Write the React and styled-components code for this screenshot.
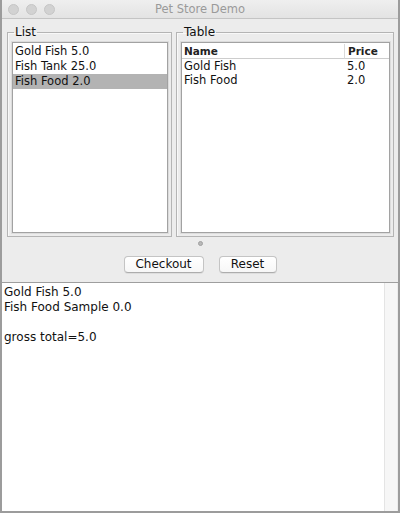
import { Fragment } from 'react';
import styled, { createGlobalStyle } from 'styled-components';

const GlobalStyle = createGlobalStyle`
  html, body {
    margin: 0;
    padding: 0;
    background: #ffffff;
  }
  * {
    box-sizing: border-box;
  }
`;

const Window = styled.div`
  width: 400px;
  height: 513px;
  display: flex;
  flex-direction: column;
  background: #ececec;
  border-left: 2px solid #9c9c9c;
  border-right: 2px solid #9c9c9c;
  border-bottom: 2px solid #9c9c9c;
  font-family: 'DejaVu Sans', 'Liberation Sans', sans-serif;
  color: #111;
  overflow: hidden;
`;

const TitleBar = styled.div`
  height: 19px;
  flex: none;
  display: grid;
  grid-template-columns: 70px 1fr 70px;
  align-items: center;
  background: linear-gradient(#efefef, #e3e3e3);
  border-bottom: 1px solid #c4c4c4;
  margin: 0 -2px;
`;

const Lights = styled.div`
  display: flex;
  gap: 7px;
  padding-left: 8px;
`;

const Light = styled.span`
  width: 11px;
  height: 11px;
  border-radius: 50%;
  background: #d2d2d2;
  border: 1px solid #c6c6c6;
`;

const Title = styled.div`
  text-align: center;
  font-size: 11.5px;
  color: #9a9a9a;
`;

const TopArea = styled.div`
  height: 219px;
  flex: none;
  display: grid;
  grid-template-columns: 165px 1fr;
  gap: 4px;
  padding: 7px 4px 1px 5px;
`;

const Panel = styled.fieldset`
  margin: 0;
  min-width: 0;
  display: flex;
  flex-direction: column;
  padding: 0 3px 3px 4px;
  border: 1px solid #b4b4b4;
  box-shadow: inset 1px 1px 0 #f8f8f8;
`;

const Legend = styled.legend`
  padding: 0 1px;
  margin-left: 2px;
  font-size: 12px;
  line-height: 13px;
  color: #111;
`;

const Inner = styled.div`
  flex: 1;
  background: #fff;
  border: 1px solid #a2a2a2;
  box-shadow: 0 0 0 1px #dcdcdc;
  margin-top: 3px;
  padding-top: 1px;
`;

const ListRow = styled.div`
  height: 15px;
  line-height: 15px;
  padding-left: 2px;
  font-size: 11.5px;
  background: ${(p) => (p.$selected ? '#b3b3b3' : 'transparent')};
`;

const TableGrid = styled.div`
  display: grid;
  grid-template-columns: 1fr 45px;
`;

const HeadCell = styled.div`
  height: 15px;
  line-height: 14px;
  font-size: 10.5px;
  font-weight: 600;
  color: #222;
  padding-left: ${(p) => (p.$first ? '2px' : '3px')};
  border-bottom: 1px solid #cdcdcd;
  border-left: ${(p) => (p.$first ? 'none' : '1px solid #dadada')};
`;

const Cell = styled.div`
  height: 14px;
  line-height: 14px;
  font-size: 11.5px;
  padding-left: ${(p) => (p.$first ? '2px' : '3px')};
`;

const Divider = styled.div`
  height: 11px;
  flex: none;
  display: flex;
  align-items: center;
  justify-content: center;
`;

const Grip = styled.span`
  width: 5px;
  height: 5px;
  border-radius: 50%;
  background: #b8b8b8;
  border: 1px solid #a0a0a0;
`;

const ButtonRow = styled.div`
  height: 33px;
  flex: none;
  display: flex;
  justify-content: center;
  gap: 15px;
  padding-top: 7px;
`;

const Button = styled.button`
  width: ${(p) => p.$w}px;
  height: 17px;
  padding: 0;
  font-family: inherit;
  font-size: 12px;
  line-height: 15px;
  color: #111;
  background: linear-gradient(#ffffff, #f7f7f7);
  border: 1px solid #c4c4c4;
  border-bottom-color: #adadad;
  border-radius: 4px;
  box-shadow: 0 1px 0 rgba(0, 0, 0, 0.06);
`;

const TextArea = styled.div`
  flex: 1;
  display: flex;
  background: #fff;
  border-top: 1px solid #9e9e9e;
  margin: 0 -1px;
`;

const TextBody = styled.div`
  flex: 1;
  padding: 2px 3px;
  font-size: 12px;
  line-height: 15px;
  white-space: pre;
`;

const Scrollbar = styled.div`
  width: 14px;
  margin-right: 1px;
  background: #f6f6f6;
  border-left: 1px solid #e4e4e4;
  border-right: 1px solid #ececec;
`;

const items = [
  { name: 'Gold Fish', price: '5.0' },
  { name: 'Fish Tank', price: '25.0' },
  { name: 'Fish Food', price: '2.0' },
];

const cart = [
  { name: 'Gold Fish', price: '5.0' },
  { name: 'Fish Food', price: '2.0' },
];

export default function App() {
  const output = 'Gold Fish 5.0\nFish Food Sample 0.0\n\ngross total=5.0';

  return (
    <>
      <GlobalStyle />
      <Window>
        <TitleBar>
          <Lights>
            <Light />
            <Light />
            <Light />
          </Lights>
          <Title>Pet Store Demo</Title>
          <div />
        </TitleBar>

        <TopArea>
          <Panel>
            <Legend>List</Legend>
            <Inner>
              {items.map((item, i) => (
                <ListRow key={item.name} $selected={i === 2}>
                  {item.name} {item.price}
                </ListRow>
              ))}
            </Inner>
          </Panel>
          <Panel>
            <Legend>Table</Legend>
            <Inner>
              <TableGrid>
                <HeadCell $first>Name</HeadCell>
                <HeadCell>Price</HeadCell>
                {cart.map((row) => (
                  <Fragment key={row.name}>
                    <Cell $first>{row.name}</Cell>
                    <Cell>{row.price}</Cell>
                  </Fragment>
                ))}
              </TableGrid>
            </Inner>
          </Panel>
        </TopArea>

        <Divider>
          <Grip />
        </Divider>

        <ButtonRow>
          <Button $w={80}>Checkout</Button>
          <Button $w={58}>Reset</Button>
        </ButtonRow>

        <TextArea>
          <TextBody>{output}</TextBody>
          <Scrollbar />
        </TextArea>
      </Window>
    </>
  );
}
